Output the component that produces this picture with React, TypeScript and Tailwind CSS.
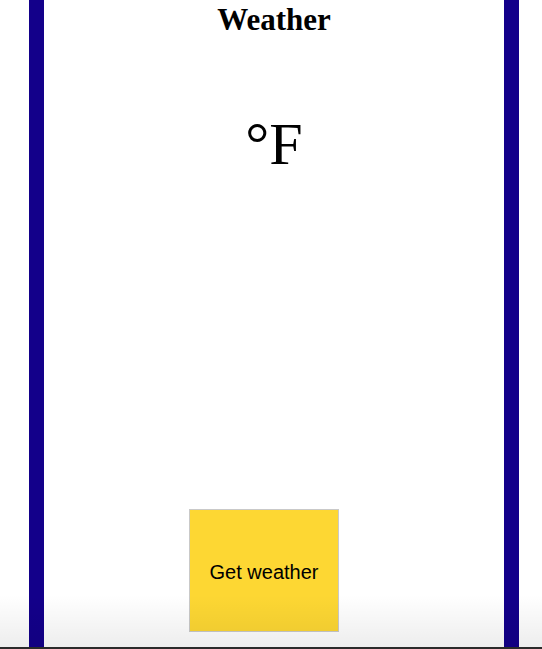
export default function App() {
  return (
    <div className="relative h-[649px] w-[542px] overflow-hidden bg-white">
      <div className="ml-[29px] flex h-full w-[490px] flex-col items-center border-x-[15px] border-[#13008a]">
        <h1 className="mt-[2px] text-[31px] leading-[36px] font-bold text-black [font-family:'Liberation_Serif',serif]">
          Weather
        </h1>
        <div className="mt-[76px] text-[60px] leading-[60px] text-black [font-family:'Liberation_Serif',serif]">
          °F
        </div>
        <button className="mt-auto mb-[17px] ml-[145px] h-[123px] w-[150px] self-start border border-[#c9c9c9] bg-[#fdd733] pt-[3px] text-[20px] text-black [font-family:'Liberation_Sans',Arial,sans-serif]">
          Get weather
        </button>
      </div>

      {/* window bottom shade */}
      <div className="pointer-events-none absolute inset-x-0 bottom-[2px] h-[52px] bg-gradient-to-b from-white/0 to-black/[0.07]" />
      <div className="absolute inset-x-0 bottom-0 h-[2px] bg-[#2a2a2a]" />
    </div>
  )
}
